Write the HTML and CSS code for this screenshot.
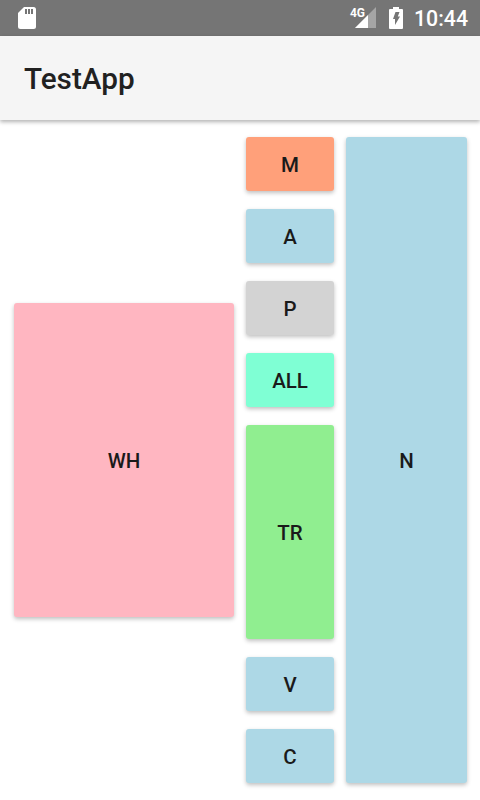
FILE: index.html
```html
<!DOCTYPE html>
<html lang="en">
<head>
    <meta charset="UTF-8">
    <meta name="viewport" content="width=device-width, initial-scale=1.0">
    <title>TestApp</title>
    <link rel="stylesheet" href="styles.css">
</head>
<body>

<div class="status-bar">
    <svg class="sd-icon" width="18" height="22" viewBox="0 0 18 22">
        <path d="M6 0H15.5Q18 0 18 2.5V19.5Q18 22 15.5 22H2.5Q0 22 0 19.5V6Z" fill="#fff"/>
        <path d="M7 2H9V7H7ZM10 2H12V7H10ZM13 2H15V7H13Z" fill="#757575"/>
    </svg>
    <div class="status-right">
        <div class="signal">
            <span class="network">4G</span>
            <svg width="21" height="21" viewBox="0 0 21 21">
                <path d="M21 0V21H0Z" fill="#fff" fill-opacity="0.35"/>
                <path d="M13 8V21H0Z" fill="#fff"/>
            </svg>
        </div>
        <svg class="battery" width="14" height="22" viewBox="0 0 14 22">
            <path d="M4 0H10V2H13Q14 2 14 3V21Q14 22 13 22H1Q0 22 0 21V3Q0 2 1 2H4Z" fill="#fff"/>
            <path d="M6.5 5H10.5L8.8 9.5H11L6 18V12H4Z" fill="#757575"/>
        </svg>
        <span class="clock">10:44</span>
    </div>
</div>

<div class="app-bar">TestApp</div>

<div class="content">
    <div class="col-left">
        <button class="tile pink wh">WH</button>
    </div>
    <div class="col-mid">
        <button class="tile salmon small">M</button>
        <button class="tile blue small">A</button>
        <button class="tile grey small">P</button>
        <button class="tile aqua small">ALL</button>
        <button class="tile green tall">TR</button>
        <button class="tile blue small">V</button>
        <button class="tile blue small">C</button>
    </div>
    <div class="col-right">
        <button class="tile blue full">N</button>
    </div>
</div>

</body>
</html>
```

FILE: styles.css
```css
* {
    box-sizing: border-box;
}

body {
    margin: 0;
    font-family: Roboto, sans-serif;
    background: #fff;
    color: #212121;
}

.status-bar {
    height: 36px;
    background: #757575;
    display: flex;
    align-items: center;
    justify-content: space-between;
    padding: 0 12px 0 18px;
}

.status-right {
    display: flex;
    align-items: center;
}

.signal {
    position: relative;
    width: 26px;
    height: 22px;
    display: flex;
    justify-content: flex-end;
    align-items: flex-start;
    margin-right: 13px;
}

.network {
    position: absolute;
    left: 0;
    top: 0;
    color: #fff;
    font-size: 12px;
    font-weight: 700;
    line-height: 13px;
}

.clock {
    color: #fff;
    font-size: 21.3px;
    font-weight: 500;
    margin-left: 11px;
}

.app-bar {
    height: 84px;
    background: #f5f5f5;
    padding-left: 24px;
    display: flex;
    align-items: center;
    font-size: 29.7px;
    font-weight: 500;
    box-shadow: 0 2px 4px rgba(0, 0, 0, 0.3);
    position: relative;
}

.content {
    display: flex;
    gap: 12px;
    padding: 17px 0 17px 14px;
}

.col-left {
    width: 220px;
    display: flex;
    align-items: center;
}

.col-mid {
    width: 88px;
    display: flex;
    flex-direction: column;
    gap: 18px;
}

.col-right {
    width: 121px;
}

.tile {
    display: block;
    width: 100%;
    border: 0;
    padding: 2px 0 0;
    border-radius: 3px;
    font-family: Roboto, sans-serif;
    font-size: 20.5px;
    font-weight: 500;
    color: #1a1a1a;
    box-shadow: 0 2px 4px rgba(0, 0, 0, 0.25);
}

.small {
    height: 54px;
}

.tall {
    height: 214px;
}

.wh {
    height: 314px;
}

.full {
    height: 646px;
}

.salmon { background: #ffa07a; }
.blue { background: #add8e6; }
.grey { background: #d3d3d3; }
.aqua { background: #7fffd4; }
.green { background: #90ee90; }
.pink { background: #ffb6c1; }
```
